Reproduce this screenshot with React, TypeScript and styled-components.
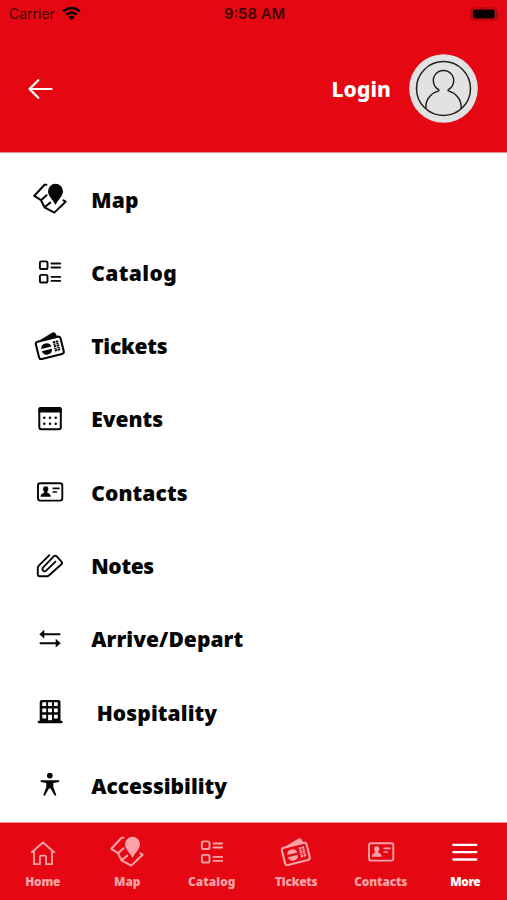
import React from 'react';
import styled, { createGlobalStyle } from 'styled-components';

const RED = '#e50813';

const GlobalStyle = createGlobalStyle`
  * { box-sizing: border-box; }
  body { margin: 0; background: #fff; }
`;

const Screen = styled.div`
  width: 507px;
  height: 900px;
  display: flex;
  flex-direction: column;
  overflow: hidden;
  background: #fff;
  color: #060606;
  font-family: 'Noto Sans', sans-serif;
`;

const Top = styled.header`
  height: 153px;
  flex: none;
  background: ${RED};
  border-bottom: 1px solid #f28a8f;
`;

const StatusBar = styled.div`
  display: grid;
  grid-template-columns: 1fr auto 1fr;
  align-items: center;
  height: 27px;
  padding: 0 7px 0 9px;
  font-family: Inter, sans-serif;
  color: #3b0306;
`;

const Carrier = styled.span`
  display: flex;
  align-items: center;
  gap: 7px;
  font-size: 14px;
`;

const Clock = styled.span`
  font-size: 14.8px;
  font-weight: 600;
`;

const BatterySlot = styled.span`
  display: flex;
  justify-content: flex-end;
`;

const Header = styled.div`
  display: flex;
  align-items: center;
  height: 123px;
  padding: 0 29.5px 0 24.5px;
`;

const Login = styled.span`
  margin-left: auto;
  margin-right: 17.5px;
  font-size: 21px;
  font-weight: 800;
  letter-spacing: 0.1px;
  color: #fff;
`;

const Menu = styled.nav`
  flex: none;
  height: 669px;
  padding-top: 10.4px;
  overflow: hidden;
`;

const MenuRow = styled.a`
  display: flex;
  align-items: center;
  height: 73.3px;
  padding-left: 30px;
  gap: 21.2px;
`;

const MenuLabel = styled.span<{ $spacing: number; $indent?: number }>`
  padding-left: ${(p) => p.$indent ?? 0}px;
  padding-bottom: 1px;
  font-size: 21px;
  line-height: 28px;
  font-weight: 900;
  letter-spacing: ${(p) => p.$spacing}px;
  white-space: nowrap;
`;

const TabBar = styled.nav`
  display: grid;
  grid-template-columns: repeat(6, 1fr);
  flex: none;
  height: 78px;
  background: ${RED};
  border-top: 1px solid #f28a8f;
`;

const Tab = styled.a<{ $active?: boolean }>`
  display: flex;
  flex-direction: column;
  align-items: center;
  padding: 10px 0 0 1px;
  color: ${(p) => (p.$active ? '#fff' : '#f8a3a7')};
`;

const TabLabel = styled.span<{ $spacing: number }>`
  font-size: 11.8px;
  line-height: 16px;
  font-weight: 900;
  letter-spacing: ${(p) => p.$spacing}px;
  white-space: nowrap;
`;

const Glyph = styled.svg`
  display: block;
  flex: none;
  width: 40px;
  height: 40px;
  fill: none;
  stroke: currentColor;
  stroke-width: 2;
  stroke-linecap: round;
  stroke-linejoin: round;
`;

type IconName =
  | 'map' | 'catalog' | 'tickets' | 'events' | 'contacts' | 'notes'
  | 'arrive' | 'hotel' | 'access' | 'home' | 'more';

const solid = { fill: 'currentColor', stroke: 'none' };

const drawings: Record<IconName, React.ReactNode> = {
  map: (
    <>
      <path d="M16.4 4.8 14.6 4.7 4.300 15.800 11 20.200 14.500 27.300 24.300 32.600 35.600 21.700 33.400 20.300M11 20.200l5.600-5M14.500 27.300l5.800-4.700" strokeWidth="2" />
      <path d="M25.500 3.800a7.500 7.500 0 0 0-7.500 7.500c0 4.800 4.600 8 7.500 13.700 2.900-5.700 7.500-8.900 7.500-13.700A7.500 7.500 0 0 0 25.500 3.800z" {...solid} />
    </>
  ),
  catalog: (
    <>
      <rect x="9.900" y="8.400" width="7.600" height="7.600" rx="1.600" strokeWidth="1.900" />
      <rect x="9.900" y="21.900" width="7.600" height="7.600" rx="1.600" strokeWidth="1.900" />
      <path d="M21.500 10.500h8.700M21.500 14.500h8.700M21.500 23.900h8.700M21.500 27.900h8.700" strokeWidth="1.900" />
    </>
  ),
  tickets: (
    <>
      <path d="M8.500 14 22.500 5.500q1.900-.9 2.900.8l2.600 4.200z" {...solid} />
      <g transform="rotate(-14 19.800 20.800)">
        <rect x="7.100" y="12" width="25.400" height="17.700" rx="2.400" strokeWidth="2.100" />
        <path d="M11.200 20a5.300 5.300 0 0 1 10.500 0zM11.200 22.200a5.300 5.300 0 0 0 10.500 0z" {...solid} />
        <path d="M25.200 15.400v11M28.300 15.400v11" strokeWidth="2.500" strokeLinecap="butt" strokeDasharray="2 .6 1 .5" />
      </g>
    </>
  ),
  events: (
    <>
      <rect x="9.300" y="8.200" width="21.500" height="21" rx="2" />
      <path d="M8.300 12.600V9q0-1.900 2-1.900h19.500q2 0 2 1.900v3.600z" {...solid} />
      <path d="M14.300 17.700h.01M20 17.700h.01M25.700 17.700h.01M14.300 23.700h.01M20 23.700h.01M25.700 23.700h.01" strokeWidth="2.500" />
    </>
  ),
  contacts: (
    <>
      <rect x="8" y="10.300" width="24.300" height="17.300" rx="2.300" strokeWidth="1.900" />
      <path d="M15.700 13.200c1.900 0 2.800 1.300 2.600 3-.1 1.400-.9 2.200-1.200 2.800 0 1.300 3.500 1 3.700 4.700h-10.200c.2-3.700 3.700-3.400 3.700-4.700-.3-.6-1.100-1.400-1.200-2.800-.2-1.700.7-3 2.600-3z" {...solid} />
      <path d="M23.300 15.400h5.600M23.300 19h3" strokeWidth="1.700" />
    </>
  ),
  notes: (
    <path d="M19.300 8.200 8.600 18.800q-.8.800-.8 2v6.500q0 2 2 2h7q1.200 0 2-.8L31.500 17.300q1.200-1.300 0-2.600l-4.800-5.300q-1.500-1.400-3 0L13.200 20.400q-1.500 1.600-.2 3.200 1.600 1.400 3.200 0l9.300-9" strokeWidth="1.900" />
  ),
  arrive: (
    <>
      <path d="M14 14.200h15.500M10.500 23.200H26" />
      <path d="M9.300 14.200 14.300 9.800v8.800zM30.700 23.200 25.700 18.800v8.800z" {...solid} />
    </>
  ),
  hotel: (
    <>
      <path fillRule="evenodd" d="M12 7h16.500q2 0 2 2v19H9.700V9q0-2 2-2zM12.300 9.200v3.700h3.900V9.200zM18.100 9.200v3.700H22V9.200zM23.900 9.200v3.700h3.900V9.200zM12.300 15.400v3.800h3.900v-3.800zM18.100 15.400v3.800H22v-3.800zM23.900 15.400v3.800h3.900v-3.800zM12.300 21.800v3.700h3.900v-3.700zM23.900 21.800v3.700h3.900v-3.700zM18.100 21.800v5.400H22v-5.400z" {...solid} />
      <path d="M9 29h22.300" strokeWidth="2.700" />
    </>
  ),
  access: (
    <>
      <circle cx="19.800" cy="9.600" r="2.900" {...solid} />
      <path d="M10.700 14.300h18.400v1.800l-5.800.8v4l3.100 8.300-1.600.6-4.200-7.200h-1.600l-4.200 7.200-1.600-.6 3.100-8.300v-4l-5.600-.8z" {...solid} />
    </>
  ),
  home: (
    <path d="M8.800 19.200 20 9.500 31.200 19.200M11 18v13.200h5.900v-7.200q0-1.300 1.300-1.300h3.600q1.300 0 1.300 1.300v7.200H29V18" strokeWidth="1.800" />
  ),
  more: <path d="M8.300 11.900h23M8.300 19.200h23M8.300 26.500h23" strokeWidth="2.300" />,
};

const Icon = ({ name }: { name: IconName }) => (
  <Glyph viewBox="0 0 40 40" aria-hidden="true">{drawings[name]}</Glyph>
);

const Wifi = () => (
  <svg width="19" height="15" viewBox="0 0 19 15" fill="none" stroke="#100001" strokeWidth="2.700">
    <path d="M1.200 5.400a11.800 11.800 0 0 1 16.600 0M4.300 8.800a7.400 7.400 0 0 1 10.400 0" />
    <path d="M9.500 14.200 6.400 11a4.400 4.400 0 0 1 6.200 0z" fill="#100001" stroke="none" />
  </svg>
);

const Battery = () => (
  <svg width="30" height="14" viewBox="0 0 30 14">
    <rect x="1" y="1" width="25.500" height="12" rx="3.500" fill="none" stroke="#a1070d" strokeWidth="1.200" />
    <rect x="2.800" y="2.600" width="22" height="8.800" rx="2" fill="#080000" />
    <path d="M28 4.700q1.600 2.300 0 4.600z" fill="#8f070c" />
  </svg>
);

const BackArrow = () => (
  <svg width="30" height="24" viewBox="0 0 30 24" fill="none" stroke="#fff" strokeWidth="2.200" strokeLinecap="round" strokeLinejoin="round">
    <path d="M26.500 12H4.500M13.300 3.200 4.500 12l8.800 8.800" />
  </svg>
);

const Avatar = () => (
  <svg width="69" height="69" viewBox="0 0 69 69" fill="none" stroke="#222" strokeWidth="1.500">
    <circle cx="34.500" cy="34.500" r="34.300" fill="#e2e2e2" stroke="none" />
    <circle cx="34.500" cy="34.500" r="27" />
    <path d="M16.900 54.500v-2c0-7.500 5.300-13.500 12.800-15.600v-1.300a10.200 10.200 0 1 1 9.600 0v1.300c7.500 2.100 12.800 8.100 12.800 15.600v2" />
  </svg>
);

const menu: { icon: IconName; label: string; spacing: number; indent?: number }[] = [
  { icon: 'map', label: 'Map', spacing: 0.2 },
  { icon: 'catalog', label: 'Catalog', spacing: 0.4 },
  { icon: 'tickets', label: 'Tickets', spacing: -0.25 },
  { icon: 'events', label: 'Events', spacing: 0 },
  { icon: 'contacts', label: 'Contacts', spacing: 0.1 },
  { icon: 'notes', label: 'Notes', spacing: -0.35 },
  { icon: 'arrive', label: 'Arrive/Depart', spacing: 0.05 },
  { icon: 'hotel', label: 'Hospitality', spacing: 0.1, indent: 5.5 },
  { icon: 'access', label: 'Accessibility', spacing: 0 },
];

const tabs: { icon: IconName; label: string; spacing: number; active?: boolean }[] = [
  { icon: 'home', label: 'Home', spacing: -0.15 },
  { icon: 'map', label: 'Map', spacing: 0 },
  { icon: 'catalog', label: 'Catalog', spacing: 0.1 },
  { icon: 'tickets', label: 'Tickets', spacing: -0.2 },
  { icon: 'contacts', label: 'Contacts', spacing: -0.1 },
  { icon: 'more', label: 'More', spacing: -0.4, active: true },
];

export default function App() {
  return (
    <Screen>
      <GlobalStyle />
      <Top>
        <StatusBar>
          <Carrier>Carrier <Wifi /></Carrier>
          <Clock>9:58 AM</Clock>
          <BatterySlot><Battery /></BatterySlot>
        </StatusBar>
        <Header>
          <BackArrow />
          <Login>Login</Login>
          <Avatar />
        </Header>
      </Top>
      <Menu>
        {menu.map((m) => (
          <MenuRow key={m.label}>
            <Icon name={m.icon} />
            <MenuLabel $spacing={m.spacing} $indent={m.indent}>{m.label}</MenuLabel>
          </MenuRow>
        ))}
      </Menu>
      <TabBar>
        {tabs.map((t) => (
          <Tab key={t.label} $active={t.active}>
            <Icon name={t.icon} />
            <TabLabel $spacing={t.spacing}>{t.label}</TabLabel>
          </Tab>
        ))}
      </TabBar>
    </Screen>
  );
}
